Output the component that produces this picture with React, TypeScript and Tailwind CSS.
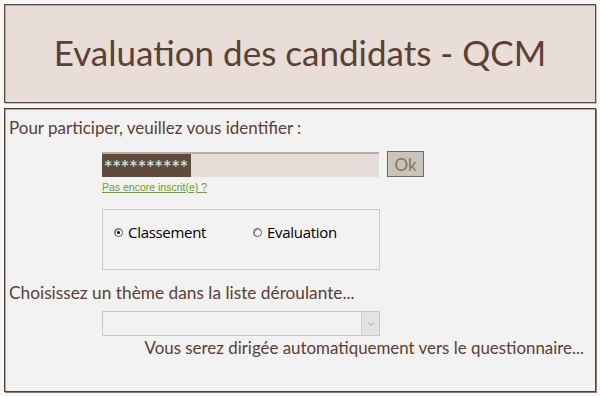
import { ChevronDown } from 'lucide-react';

const brown = 'text-[#5b4033]';

export default function App() {
  return (
    <div className="w-[600px] h-[396px] bg-[#f7f7f7] p-1 flex flex-col gap-[5px] font-['Lato',sans-serif]">
      {/* Title banner */}
      <div className="h-[99px] shrink-0 border border-[#5e4a40] shadow-[inset_1px_1px_0_#b9aaa2,1px_1px_0_#c9bfba] bg-[#e8ddd7] flex items-center justify-center">
        <h1 className={`text-[35px] leading-none ${brown} pb-[2px]`}>Evaluation des candidats - QCM</h1>
      </div>

      {/* Login form */}
      <div className="flex-1 border border-[#4f3f37] shadow-[inset_1px_1px_0_#b9aaa2,1px_1px_0_#8a7b74] bg-[#f2f2f2] pl-1 pt-[9px] flex flex-col">
        <p className={`text-[17px] leading-5 ${brown}`}>Pour participer, veuillez vous identifier :</p>

        <div className="pl-[93px] pt-[13px]">
          <div className="flex items-center gap-2">
            <div className="w-[277px] h-[25px] bg-[#e7ddd8] border-t-2 border-[#b4aca7] flex items-center">
              <span className="h-full bg-[#5f4a3e] text-[#c5e4df] font-['DejaVu_Sans_Mono',monospace] font-bold text-[14px] leading-[23px] pl-[2px] w-[89px] overflow-hidden">
                **********
              </span>
            </div>
            <button className="w-[37px] h-[26px] bg-[#c8c4bb] border border-[#6e6a66] text-[#8d7457] text-[17px] leading-none">
              Ok
            </button>
          </div>
          <a className="block mt-[3px] text-[10.5px] leading-[14px] text-[#6aa121] underline font-['Liberation_Sans',sans-serif]">
            Pas encore inscrit(e) ?
          </a>

          <div className="mt-[15px] w-[278px] h-[61px] border border-[#cdcdcd] flex items-start pt-[12px] pl-[11px] font-['Open_Sans',sans-serif] text-[15px] text-black">
            <label className="flex items-center gap-[5px] w-[139px]">
              <span className="w-[9px] h-[9px] rounded-full border border-[#555] bg-white flex items-center justify-center shadow-[inset_1px_1px_0_#999]">
                <span className="w-[3px] h-[3px] rounded-full bg-black" />
              </span>
              <span className="leading-5 tracking-[-0.3px]">Classement</span>
            </label>
            <label className="flex items-center gap-[5px]">
              <span className="w-[9px] h-[9px] rounded-full border border-[#555] bg-white shadow-[inset_1px_1px_0_#999]" />
              <span className="leading-5 tracking-[-0.3px]">Evaluation</span>
            </label>
          </div>
        </div>

        <p className={`mt-[13px] text-[17.3px] leading-5 ${brown}`}>Choisissez un thème dans la liste déroulante...</p>

        <div className="pl-[93px] pt-[8px]">
          <div className="w-[278px] h-[25px] border border-[#c9c9c9] bg-[#f2f2f2] flex justify-end">
            <div className="w-[18px] h-full bg-[#e3e3e3] border-l border-[#cfcfcf] flex items-center justify-center">
              <ChevronDown className="w-[10px] h-[10px] text-[#7a7a7a]" strokeWidth={1.5} />
            </div>
          </div>
        </div>

        <p className={`pt-[2px] pr-[11px] text-right text-[16.9px] leading-5 ${brown}`}>
          Vous serez dirigée automatiquement vers le questionnaire...
        </p>
      </div>
    </div>
  );
}
